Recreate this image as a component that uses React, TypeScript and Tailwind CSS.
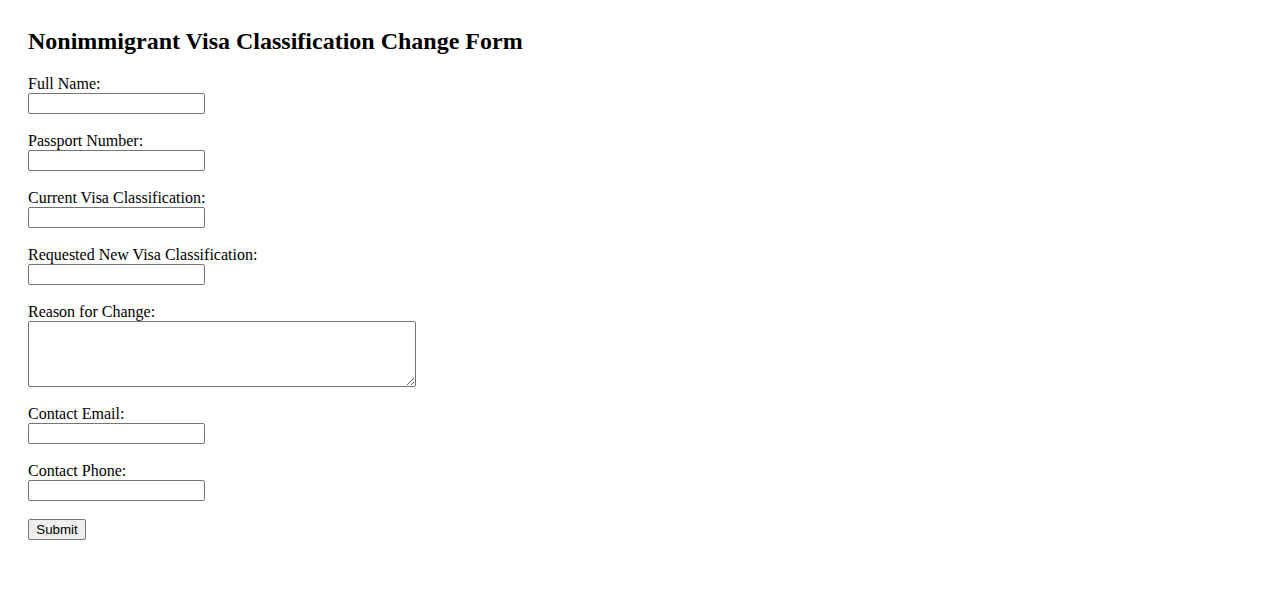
const fields: { label: string; type: string; area?: boolean }[] = [
  { label: "Full Name:", type: "text" },
  { label: "Passport Number:", type: "text" },
  { label: "Current Visa Classification:", type: "text" },
  { label: "Requested New Visa Classification:", type: "text" },
  { label: "Reason for Change:", type: "text", area: true },
  { label: "Contact Email:", type: "email" },
  { label: "Contact Phone:", type: "tel" },
];

export default function App() {
  return (
    <div className="min-h-screen bg-white pl-[28px] pt-[28px] text-black font-['Liberation_Serif','Times_New_Roman',serif]">
      <h2 className="text-[24px] font-bold leading-[27px] mb-[20px]">
        Nonimmigrant Visa Classification Change Form
      </h2>
      <form className="flex flex-col items-start" onSubmit={(e) => e.preventDefault()}>
        {fields.map((f) => (
          <div key={f.label} className="flex flex-col items-start mb-[18px]">
            <label className="block text-[16px] leading-[18px]">{f.label}</label>
            {f.area ? (
              <textarea className="block w-[388px] h-[66px] border border-[#767676] rounded-[2px] bg-white px-[2px] py-[2px] text-[13px] font-['Liberation_Mono',monospace]" />
            ) : (
              <input
                type={f.type}
                className="block w-[177px] h-[21px] border border-[#767676] rounded-[2px] bg-white px-[2px] py-[1px] text-[13.33px] font-['Liberation_Sans',Arial,sans-serif]"
              />
            )}
          </div>
        ))}
        <button
          type="submit"
          className="-mt-[0px] h-[21px] w-[58px] border border-[#767676] rounded-[2px] bg-[#efefef] text-[13.33px] leading-[17px] font-['Liberation_Sans',Arial,sans-serif]"
        >
          Submit
        </button>
      </form>
    </div>
  );
}
